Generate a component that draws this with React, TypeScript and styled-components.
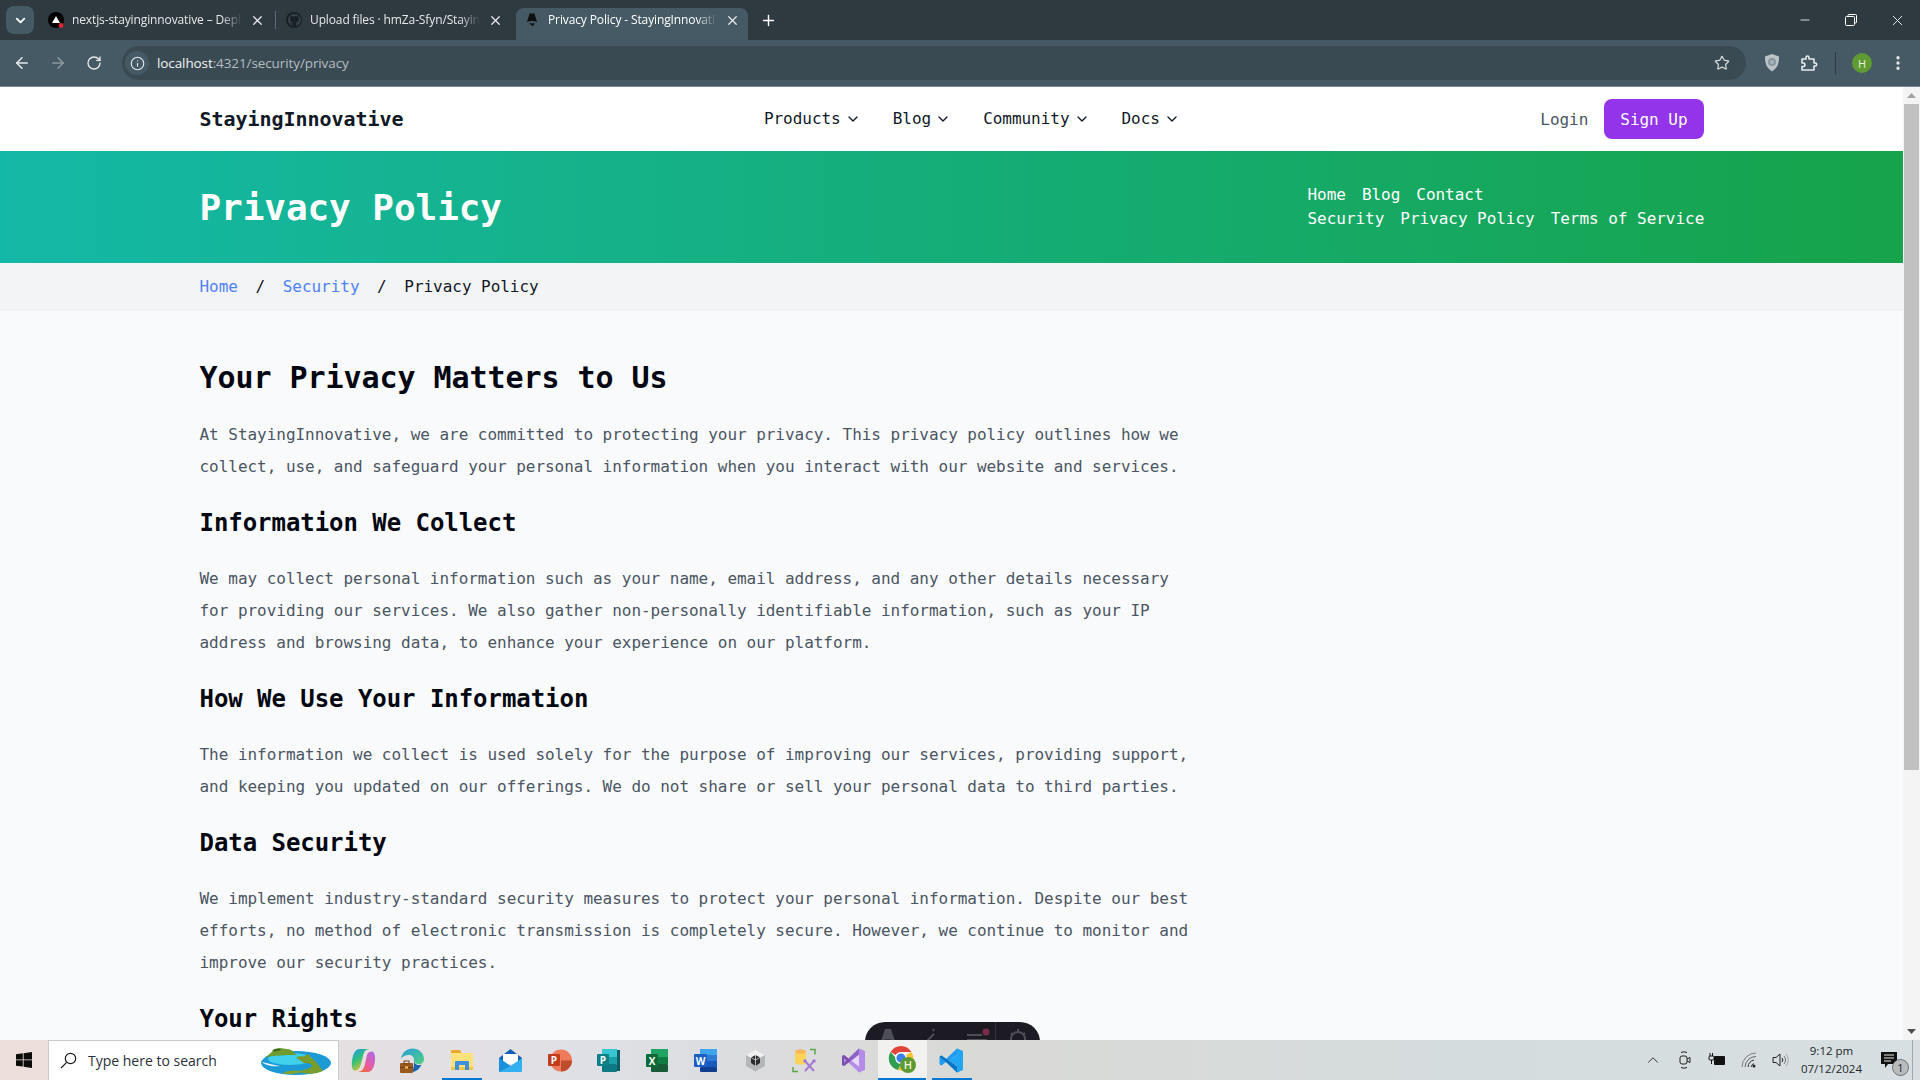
import React from "react";
import styled, { createGlobalStyle } from "styled-components";
import { ArrowLeft, ArrowRight, ChevronDown, ChevronUp, EllipsisVertical, Info, Minus, Plus, RotateCw, Star, X } from "lucide-react";

const Global = createGlobalStyle`
  html, body { margin: 0; padding: 0; height: 100%; overflow: hidden; background: #f9fafb; }
  * { box-sizing: border-box; }
  p, h1, h2, h3 { margin: 0; }
`;

const mono = `"DejaVu Sans Mono", "Liberation Mono", monospace`;
const ui = `"Open Sans", "Noto Sans", "Liberation Sans", sans-serif`;

const Screen = styled.div`
  width: 1920px; height: 1080px; display: flex; flex-direction: column; overflow: hidden;
`;

/* ---------- browser chrome ---------- */
const TabStrip = styled.div`
  height: 40px; background: #2f3a40; display: flex; align-items: flex-end; flex: none;
  padding-left: 6px; font-family: ${ui}; color: #e8eaed;
`;
const TabCaret = styled.div`
  width: 28px; height: 28px; margin: 0 6px 6px 0; border-radius: 8px; background: #455a64;
  display: flex; align-items: center; justify-content: center; color: #fff;
`;
const Tab = styled.div<{ $active?: boolean; $width: number; $gap: number }>`
  width: ${(p) => p.$width}px; height: 32px; margin-right: ${(p) => p.$gap}px; padding: 0 8px 8px;
  display: flex; align-items: center; gap: 8px; position: relative; flex: none;
  background: ${(p) => (p.$active ? "#455a64" : "transparent")};
  border-radius: 8px 8px 0 0;
`;
const TabTitle = styled.span<{ $active?: boolean }>`
  flex: 1; min-width: 0; white-space: nowrap; font-size: 12px; line-height: 16px; letter-spacing: -0.12px;
  overflow: hidden;
  color: ${(p) => (p.$active ? "#fff" : "#e6e8ea")};
  -webkit-mask-image: linear-gradient(to right, #000 88%, transparent 100%);
  mask-image: linear-gradient(to right, #000 88%, transparent 100%);
`;
const TabDivider = styled.div`
  position: absolute; right: -3px; top: 3px; width: 1px; height: 18px; background: #5f6b72;
`;
const NewTab = styled.div`
  margin: 0 0 6px 10px; width: 20px; height: 28px; display: flex; align-items: center; justify-content: center; color: #fff;
`;
const WindowControls = styled.div`
  margin-left: auto; align-self: flex-start; display: flex; color: #fff;
`;
const WindowButton = styled.div`
  width: 46px; height: 40px; display: flex; align-items: center; justify-content: center;
`;
const Toolbar = styled.div`
  height: 47px; flex: none; background: #455a64; display: flex; align-items: flex-start; padding: 6px 4px 0;
  border-bottom: 1px solid #78878f; font-family: ${ui};
`;
const ToolCell = styled.div<{ $dim?: boolean; $shift?: number }>`
  width: 36px; height: 34px; flex: none; display: flex; align-items: center; justify-content: center;
  margin-left: ${(p) => p.$shift ?? 0}px;
  color: ${(p) => (p.$dim ? "#8d9aa1" : "#e8eaed")};
`;
const Omnibox = styled.div`
  flex: 1; height: 34px; margin: 0 8px 0 10px; border-radius: 17px; background: #3a4a53;
  display: flex; align-items: center; padding: 0 16px 0 3px;
`;
const InfoChip = styled.div`
  width: 24px; height: 24px; margin: 0 8px 0 0; border-radius: 50%; background: #455a64;
  display: flex; align-items: center; justify-content: center; color: #e8eaed;
`;
const Url = styled.div`
  flex: 1; font-size: 13.5px; color: #b4bdc2; letter-spacing: -0.1px;
  b { font-weight: 400; color: #f1f3f4; }
`;
const ToolSep = styled.div`
  width: 1px; height: 22px; margin: 6px 8px 0; background: #2c383e; flex: none;
`;
const Avatar = styled.div`
  width: 20px; height: 20px; border-radius: 50%; background: #5f9a32; color: #e8f2de;
  font-size: 11px; display: flex; align-items: center; justify-content: center;
`;

/* ---------- page ---------- */
const Viewport = styled.div`
  flex: 1; min-height: 0; display: flex; position: relative; overflow: hidden; background: #f9fafb;
`;
const Page = styled.div`
  flex: 1; min-width: 0; font-family: ${mono}; letter-spacing: -0.035px;
`;
const Container = styled.div`
  width: 1504px; margin: 0 auto;
`;
const NavBar = styled.header`
  height: 64px; background: #fff;
`;
const NavRow = styled(Container)`
  height: 100%; display: flex; align-items: center; justify-content: space-between;
`;
const Logo = styled.div`
  font-size: 20px; font-weight: 600; color: #111827; letter-spacing: -0.04px;
`;
const NavLinks = styled.nav`
  display: flex; gap: 32px;
`;
const NavLink = styled.div`
  display: flex; align-items: center; gap: 4px; font-size: 16px; line-height: 24px; color: #111827;
`;
const Actions = styled.div`
  display: flex; align-items: center; gap: 16px;
`;
const Login = styled.div`
  font-size: 16px; color: #4b5563;
`;
const SignUp = styled.div`
  height: 40px; padding: 0 16px; border-radius: 8px; background: #9333ea; color: #fff;
  font-size: 16px; display: flex; align-items: center;
`;
const Hero = styled.section`
  height: 112px; background: linear-gradient(to right, #14b8a6, #16a34a); color: #fff;
`;
const HeroRow = styled(Container)`
  height: 100%; display: flex; align-items: center; justify-content: space-between;
`;
const HeroTitle = styled.h1`
  font-size: 36px; line-height: 40px; font-weight: 600; letter-spacing: -0.07px; padding-top: 2px;
`;
const HeroLinks = styled.div`
  width: 396px; display: flex; flex-direction: column; font-size: 16px; line-height: 24px;
`;
const HeroLinkRow = styled.div`
  display: flex; gap: 16px; white-space: nowrap;
`;
const Crumbs = styled.div`
  height: 48px; background: #f3f4f6;
`;
const CrumbRow = styled(Container)`
  height: 100%; display: flex; align-items: center; font-size: 16px; color: #111827; padding-bottom: 1px;
`;
const CrumbLink = styled.span`
  color: #4f82f6;
`;
const CrumbSlash = styled.span`
  margin: 0 17.6px;
`;
const Article = styled(Container)`
  padding-top: 48px;
`;
const Prose = styled.div`
  width: 1003px; display: flex; flex-direction: column; gap: 24px;
`;
const Title = styled.h2`
  font-size: 30px; line-height: 36px; font-weight: 600; color: #030712; letter-spacing: -0.06px;
  padding-top: 1px; margin-bottom: -1px;
`;
const Subtitle = styled.h3`
  font-size: 24px; line-height: 32px; font-weight: 600; color: #030712; letter-spacing: -0.05px;
`;
const Para = styled.p`
  font-size: 16px; line-height: 32px; color: #4b5563;
`;
const Scrollbar = styled.div`
  width: 17px; flex: none; background: #f4f4f4; display: flex; flex-direction: column; align-items: center;
`;
const ScrollCap = styled.div`
  height: 17px; flex: none; display: flex; align-items: center; justify-content: center;
`;
const ScrollThumb = styled.div`
  width: 15px; height: 666px; background: #c1c1c1;
`;
const ScrollGap = styled.div`
  flex: 1;
`;
const DevToolbar = styled.div`
  position: absolute; left: 865px; top: 935px; width: 175px; height: 40px; border-radius: 20px;
  background: #1c1b23; display: flex; align-items: flex-start; padding: 6px 0 0 13px; color: #4e4e57;
`;
const DevCell = styled.div<{ $w: number; $inset?: number }>`
  width: ${(p) => p.$w}px; height: 20px; flex: none; padding-left: ${(p) => p.$inset ?? 0}px;
`;
const DevDivider = styled.div`
  width: 1px; height: 34px; margin-top: -6px; background: #34333c; flex: none;
`;

/* ---------- taskbar ---------- */
const Taskbar = styled.footer`
  height: 40px; flex: none; display: flex; align-items: stretch; font-family: ${ui};
  background: linear-gradient(to right, #eddfdb 0%, #e6dfe0 15%, #dfe0e6 30%, #d9d9d6 50%, #d5dcdd 75%, #d7dfe2 100%);
`;
const StartCell = styled.div`
  width: 48px; flex: none; display: flex; align-items: center; justify-content: center;
`;
const SearchBox = styled.div`
  width: 291px; flex: none; background: #fff; border: 1px solid #c9cbcd; border-bottom: 0;
  display: flex; align-items: center; padding: 0 6px 0 11px; gap: 11px; color: #2a3138; font-size: 14px;
`;
const SearchText = styled.span`
  flex: 1; white-space: nowrap;
`;
const AppCell = styled.div<{ $on?: boolean; $bar?: boolean }>`
  width: 49px; flex: none; position: relative; display: flex; align-items: center; justify-content: center;
  background: ${(p) => (p.$on ? "#f1f1ef" : "transparent")};
  &::after {
    content: ""; position: absolute; bottom: 0; height: 2px; background: #0078d4;
    left: ${(p) => (p.$on ? 0 : 5)}px; right: ${(p) => (p.$on ? 1 : 4)}px;
    display: ${(p) => (p.$bar ? "block" : "none")};
  }
`;
const Tray = styled.div`
  margin-left: auto; display: flex; align-items: stretch; color: #1e2225;
`;
const TrayCell = styled.div`
  width: 32px; display: flex; align-items: center; justify-content: center;
`;
const Clock = styled.div`
  width: 69px; display: flex; flex-direction: column; align-items: center; justify-content: center;
  font-size: 11.5px; line-height: 18px; color: #22272b;
`;
const NotifyCell = styled.div`
  width: 46px; position: relative; display: flex; align-items: center; justify-content: center;
`;
const NotifyBadge = styled.div`
  position: absolute; left: 26px; top: 19px; width: 17px; height: 17px; border-radius: 50%;
  background: #b9bcbd; border: 1px solid #6e7275; font-size: 11px; line-height: 15px; text-align: center; color: #222;
`;
const ShowDesktop = styled.div`
  width: 8px; border-left: 1px solid #9fa5a8;
`;

/* ---------- drawings ---------- */
const VercelFav = () => (
  <svg width="16" height="16" viewBox="0 0 16 16"><circle cx="8" cy="8" r="8" fill="#000" /><path d="M8 4l4 7H4z" fill="#fff" /><circle cx="13" cy="13.5" r="2.4" fill="#e5213a" /></svg>
);
const GithubFav = () => (
  <svg width="16" height="16" viewBox="0 0 16 16"><circle cx="8" cy="8" r="8" fill="#1a2126" /><path fill="#39444a" d="M8 2.2C4.700 2.2 2.100 4.800 2.100 8c0 2.600 1.700 4.800 4 5.600.3 0 .4-.1.4-.3v-1c-1.600.3-2-.4-2.100-.8-.1-.2-.4-.8-.7-.9-.2-.1-.5-.4 0-.4.5 0 .8.4.9.6.6 1 1.500.7 1.900.5 0-.4.2-.7.4-.9-1.400-.2-2.900-.7-2.900-3.200 0-.7.3-1.300.7-1.700-.1-.2-.3-.8.1-1.700 0 0 .6-.2 1.900.7.6-.2 1.200-.2 1.800-.2s1.200.1 1.800.2c1.300-.9 1.900-.7 1.900-.7.4.9.1 1.500.1 1.700.4.4.7 1 .7 1.700 0 2.500-1.600 3-3 3.200.2.2.4.6.4 1.200v1.800c0 .2.1.3.4.3 2.300-.8 4-3 4-5.600 0-3.200-2.700-5.800-5.900-5.800z" /></svg>
);
const AstroFav = () => (
  <svg width="16" height="16" viewBox="0 0 16 16"><path d="M5.600 1.500h4.800L13 10c-1.500-.8-3-1.100-5-1.100S4.500 9.200 3 10z" fill="#0d0f11" /><path d="M5.500 11c1 .6 4 .6 5 0 0 1.500-1.200 2-1.700 3.500-.5-1-1.600-1-1.800-1.900-.8-.2-1.500-.7-1.500-1.600z" fill="#0d0f11" /></svg>
);
const Restore = () => (
  <svg width="12" height="12" viewBox="0 0 12 12" fill="none" stroke="#fff"><rect x=".5" y="2.5" width="9" height="9" rx="1" /><path d="M3 2.500V1.500a1 1 0 0 1 1-1h6.500a1 1 0 0 1 1 1V8a1 1 0 0 1-1 1H9.500" /></svg>
);
const Shield = () => (
  <svg width="18" height="20" viewBox="0 0 18 20"><path d="M9 1l7 2.500c.2 6.500-1.500 11.500-7 15-5.500-3.500-7.200-8.500-7-15z" fill="#b9c3c8" /><circle cx="9" cy="9" r="4" fill="#8896a0" /><circle cx="9" cy="9" r="2" fill="#aab4ba" /></svg>
);
const Puzzle = () => (
  <svg width="20" height="20" viewBox="0 0 20 20" fill="none" stroke="#e8eaed" strokeWidth="1.6" strokeLinejoin="round"><path d="M3 6h4V4.500a1.500 1.500 0 0 1 3 0V6h5v4h1.200a1.500 1.500 0 0 1 0 3H15v4H3v-3.500h1.200a1.700 1.700 0 0 0 0-3.500H3z" /></svg>
);
const WinLogo = () => (
  <svg width="16" height="16" viewBox="0 0 16 16" fill="#0b0b0b"><path d="M0 2.300l6.800-1v6.200H0zM7.600 1.200L16 0v7.500H7.600zM0 8.300h6.800v6.300L0 13.700zM7.600 8.300H16V16l-8.400-1.200z" /></svg>
);
const SearchGlass = () => (
  <svg width="17" height="17" viewBox="0 0 17 17" fill="none" stroke="#1b1b1b" strokeWidth="1.2"><circle cx="10.500" cy="6.500" r="5.200" /><path d="M6.700 10.300L1 16" /></svg>
);
const Island = () => (
  <svg width="72" height="32" viewBox="0 0 72 32">
    <ellipse cx="36" cy="18" rx="35" ry="12" fill="#1b9ad6" />
    <ellipse cx="30" cy="14" rx="22" ry="6" fill="#3fd0ec" />
    <path d="M3 13c5-1 8-7 14-9 3-2 6 0 10 0 5 0 7 4 10 6-10 0-24 0-34 3z" fill="#6f9a2e" />
    <path d="M12 6c3-3 7-3 9-1-3 1-6 2-9 1z" fill="#3c6a1e" />
    <path d="M36 13c3-3 6-1 9-2 3-3 5-1 6 2 5 2 8 8 12 13-10 4-18 3-24 1 4-3 12-3 13-6 0-3-5-3-8-3-3-2-5-4-8-5z" fill="#7a9c2c" />
    <path d="M22 28c6-3 14-3 22-2-6 3-16 4-22 2z" fill="#83a22f" />
    <path d="M2 17c6 1 10 3 18 4-8 1-15-1-18-4z" fill="#e8f6fb" />
  </svg>
);
const Copilot = () => (
  <svg width="25" height="25" viewBox="0 0 25 25">
    <defs>
      <linearGradient id="cpA" x1="0" y1="0" x2="0.6" y2="1"><stop offset="0" stopColor="#1d9bf0" /><stop offset=".5" stopColor="#35c07a" /><stop offset="1" stopColor="#f7c325" /></linearGradient>
      <linearGradient id="cpB" x1="1" y1="0" x2="0.2" y2="1"><stop offset="0" stopColor="#a86bf2" /><stop offset=".6" stopColor="#e85b9c" /><stop offset="1" stopColor="#f0682d" /></linearGradient>
    </defs>
    <path d="M8 1h11c-3.500 0-5.500 1.500-6.500 5L10 16c-1 4-3 7-6.500 6.500C1 22 .5 18 1 13.500 1.500 7 4 1.500 8 1z" fill="url(#cpA)" />
    <path d="M6 24h11c4 0 6.500-5.500 7-11.500.4-4.500-.5-8.500-3-9-3-.5-5 2-5.500 5.500l-2 9C12.500 21 10.500 24 6 24z" fill="url(#cpB)" />
  </svg>
);
const Edge = () => (
  <svg width="25" height="25" viewBox="0 0 25 25">
    <defs><linearGradient id="edA" x1="0" y1="0" x2="1" y2="1"><stop offset="0" stopColor="#2a9ede" /><stop offset="1" stopColor="#4ed17f" /></linearGradient></defs>
    <path d="M1 11C2 4 7 .5 12.500.5 19 .5 24 5.500 24 11c0 4-3 5.500-6 5-3-.5-4-2-4-4 0-3-2-5-5-5-4 0-7 2-8 4z" fill="url(#edA)" />
    <path d="M14 12c0 3 2 5 5 5 1 0 1.800-.2 2.500-.6C19.500 21.500 15 24 11 24c-2 0-3-.3-3-.3h3c2 0 3-4 3-11.700z" fill="#1b64b0" />
    <rect x="0" y="15" width="13" height="10" rx="1" fill="#9a5a1f" />
    <rect x="4" y="13" width="5" height="3" fill="none" stroke="#7a4516" />
    <rect x="0" y="19" width="13" height="1" fill="#6d3c11" /><rect x="5" y="18.5" width="3" height="2" fill="#f5c24d" />
  </svg>
);
const Explorer = () => (
  <svg width="24" height="24" viewBox="0 0 24 24">
    <path d="M1 3a1 1 0 0 1 1-1h8l1.500 3H1z" fill="#e8a82c" />
    <rect x="1" y="5" width="22" height="16" rx="1" fill="#fde27c" />
    <path d="M1 19h22v2a1 1 0 0 1-1 1H2a1 1 0 0 1-1-1z" fill="#f4c542" />
    <path d="M5 22v-8a1 1 0 0 1 1-1h12a1 1 0 0 1 1 1v8h-4v-5H9v5z" fill="#3d8fe0" />
  </svg>
);
const Mail = () => (
  <svg width="25" height="25" viewBox="0 0 25 25">
    <path d="M12.500 1L24 10v3H1v-3z" fill="#0f5fb4" />
    <path d="M5 6h15v10H5z" fill="#fff" />
    <path d="M1 10l11.500 8L24 10v13a1 1 0 0 1-1 1H2a1 1 0 0 1-1-1z" fill="#33b0ee" />
    <path d="M1 10l11.500 8-11.500 6z" fill="#1b90dd" />
  </svg>
);
const Ppt = () => (
  <svg width="25" height="25" viewBox="0 0 25 25">
    <circle cx="14" cy="12.5" r="11" fill="#ee7a5b" />
    <path d="M14 12.500h11a11 11 0 0 1-11 11z" fill="#bf4d2c" />
    <rect x="1" y="6" width="12" height="12" rx="1" fill="#c23c1c" />
    <text x="7" y="16" fontFamily="Open Sans, sans-serif" fontSize="10" fontWeight="700" fill="#fff" textAnchor="middle">P</text>
  </svg>
);
const Pub = () => (
  <svg width="25" height="25" viewBox="0 0 25 25">
    <rect x="6" y="1" width="15" height="8" fill="#37c6d0" />
    <rect x="6" y="9" width="15" height="7" fill="#1ba0a8" />
    <rect x="6" y="16" width="15" height="8" rx="1" fill="#0c7a80" />
    <rect x="21" y="2" width="3" height="21" fill="#0c5f66" />
    <rect x="1" y="6" width="12" height="12" rx="1" fill="#0b7f86" />
    <text x="7" y="16" fontFamily="Open Sans, sans-serif" fontSize="10" fontWeight="700" fill="#fff" textAnchor="middle">P</text>
  </svg>
);
const Excel = () => (
  <svg width="25" height="25" viewBox="0 0 25 25">
    <rect x="6" y="1" width="17" height="8" fill="#21a366" />
    <rect x="6" y="9" width="17" height="7" fill="#107c41" />
    <rect x="6" y="16" width="17" height="8" rx="1" fill="#185c37" />
    <rect x="1" y="6" width="12" height="13" rx="1" fill="#0e6b38" />
    <text x="7" y="16.5" fontFamily="Open Sans, sans-serif" fontSize="10" fontWeight="700" fill="#fff" textAnchor="middle">X</text>
  </svg>
);
const Word = () => (
  <svg width="25" height="25" viewBox="0 0 25 25">
    <rect x="6" y="1" width="17" height="6" fill="#41a5ee" />
    <rect x="6" y="7" width="17" height="6" fill="#2b7cd3" />
    <rect x="6" y="13" width="17" height="6" fill="#185abd" />
    <rect x="6" y="19" width="17" height="5" rx="1" fill="#103f91" />
    <rect x="0" y="6" width="13" height="13" rx="1" fill="#1a5fc4" />
    <text x="6.5" y="16.5" fontFamily="Open Sans, sans-serif" fontSize="10" fontWeight="700" fill="#fff" textAnchor="middle">W</text>
  </svg>
);
const Unity = () => (
  <svg width="25" height="25" viewBox="0 0 25 25">
    <path d="M12.500 1.500L22 7v11l-9.500 5.500L3 18V7z" fill="#b4b6b8" />
    <path d="M12.500 1.500L22 7l-9.500 5.500L3 7z" fill="#f0f0f0" />
    <path d="M12.500 7l4.500 2.500v5.500L12.500 18 8 15V9.500z" fill="#2c2c2e" />
    <path d="M12.500 7v11M8 9.500l4.500 2.500 4.500-2.500" stroke="#d8d8d8" strokeWidth=".8" fill="none" />
  </svg>
);
const ToolIcon = () => (
  <svg width="25" height="25" viewBox="0 0 25 25" fill="none">
    <path d="M3 3h11v12c-2 2-9 2-11 0z" fill="#fcd558" />
    <ellipse cx="8.5" cy="3.5" rx="5.5" ry="2.2" fill="#f6b65c" />
    <path d="M18 1.500h5v5M1 19v4.500h5" stroke="#58a645" strokeWidth="1.5" />
    <path d="M13 13l9 10M22 13l-9 10" stroke="#a77ad0" strokeWidth="2" />
    <circle cx="13" cy="13" r="1.8" fill="#a77ad0" /><circle cx="22" cy="13" r="1.8" fill="#a77ad0" />
  </svg>
);
const VStudio = () => (
  <svg width="25" height="25" viewBox="0 0 25 25">
    <path d="M18 .500L24 3v19l-6 2.500L7.500 14.500 3 18l-2-1V8l2-1 4.500 3.500z" fill="#b58ce8" />
    <path d="M18 6.500v12L10 12.500z" fill="#e7d9fa" />
    <path d="M1 8l2-1 4.500 3.500 3 2-3 2L3 18l-2-1zM3 10v5l2.500-2.500z" fill="#7b51ad" fillRule="evenodd" />
    <path d="M18 .500L7.500 10.500l3 2L18 6.500z" fill="#8e62c4" />
  </svg>
);
const Chrome = () => (
  <svg width="30" height="30" viewBox="0 0 30 30">
    <path d="M13 1a12 12 0 0 1 10.400 6H13a6 6 0 0 0-5.200 3L2.600 7A12 12 0 0 1 13 1z" fill="#e2443a" />
    <path d="M2.600 7l5.200 6a6 6 0 0 0 5.200 6l-3 6A12 12 0 0 1 2.600 7z" fill="#2f9e4f" />
    <path d="M23.400 7A12 12 0 0 1 10 25l3-6a6 6 0 0 0 5.200-9z" fill="#f8c22d" />
    <circle cx="13" cy="13" r="5.2" fill="#3c80f0" stroke="#fff" strokeWidth="1.3" />
    <circle cx="20" cy="20" r="8" fill="#5e9a33" />
    <text x="20" y="24" fontFamily="Open Sans, sans-serif" fontSize="11" fontWeight="600" fill="#eaf4dd" textAnchor="middle">H</text>
  </svg>
);
const VSCode = () => (
  <svg width="25" height="25" viewBox="0 0 25 25">
    <path d="M18 .500L7 11 2.500 7.500.5 8.800v7.400L2.500 17.500 7 14l11 10.500 6-2.700V3.200zM18 7v11l-7.500-5.500z" fill="#1f9cf0" fillRule="evenodd" />
    <path d="M.5 8.800L2.500 7.500 18 18.500v6L7 14z" fill="#0a76c4" />
    <path d="M18 .500l6 2.700v18.600l-6 2.700V18l-7.500-5.500L18 7z" fill="#22a6f2" fillRule="evenodd" />
  </svg>
);
const MeetNow = () => (
  <svg width="16" height="22" viewBox="0 0 16 22" fill="none" stroke="#222" strokeWidth="1"><rect x="3" y="7" width="7" height="8" rx="2" /><path d="M10 10l3-1.500v5L10 12" /><path d="M4 3.500a7 7 0 0 1 6 0M4 18.500a7 7 0 0 0 6 0" /></svg>
);
const Battery = () => (
  <svg width="18" height="14" viewBox="0 0 18 14" fill="#111"><rect x="6" y="3" width="11" height="9" rx="1" /><rect x="1" y="3" width="5" height="4" rx="1" fill="none" stroke="#111" /><path d="M2 0v3M4.500 0v3M3.500 7v4" stroke="#111" fill="none" /></svg>
);
const Wifi = () => (
  <svg width="16" height="16" viewBox="0 0 16 16" fill="none" stroke="#333" strokeWidth="1"><path d="M1 15A14 14 0 0 1 15 1" opacity=".55" /><path d="M4 15A11 11 0 0 1 15 4.500" opacity=".7" /><path d="M7 15a8 8 0 0 1 6-7" /><path d="M10 15a5 5 0 0 1 3-3.500" /><circle cx="13" cy="14" r="1.5" fill="#222" stroke="none" /></svg>
);
const Volume = () => (
  <svg width="18" height="16" viewBox="0 0 18 16" fill="none" stroke="#222" strokeWidth="1"><path d="M1 5.500h3L8 2v12L4 10.500H1z" /><path d="M10 6a3 3 0 0 1 0 4" /><path d="M12 4a6 6 0 0 1 0 8" stroke="#777" /><path d="M14 2a9 9 0 0 1 0 12" stroke="#aaa" /></svg>
);
const Bubble = () => (
  <svg width="17" height="17" viewBox="0 0 17 17"><path d="M0 0h16v12H7l-3 4v-4H0z" fill="#111" /><path d="M3 3h10M3 6h10M3 9h7" stroke="#e8eaea" strokeWidth="1" /></svg>
);

const apps = [
  { id: "copilot", Icon: Copilot },
  { id: "edge", Icon: Edge },
  { id: "explorer", Icon: Explorer, bar: true },
  { id: "mail", Icon: Mail },
  { id: "ppt", Icon: Ppt },
  { id: "pub", Icon: Pub },
  { id: "excel", Icon: Excel },
  { id: "word", Icon: Word },
  { id: "unity", Icon: Unity },
  { id: "tool", Icon: ToolIcon },
  { id: "vs", Icon: VStudio },
  { id: "chrome", Icon: Chrome, bar: true, on: true },
  { id: "vscode", Icon: VSCode, bar: true },
];

const navItems = ["Products", "Blog", "Community", "Docs"];

export default function App() {
  return (
    <Screen>
      <Global />
      <TabStrip>
        <TabCaret><ChevronDown size={15} strokeWidth={3} /></TabCaret>
        <Tab $width={233} $gap={5}>
          <VercelFav />
          <TabTitle>nextjs-stayinginnovative – Depl</TabTitle>
          <X size={15} strokeWidth={2} />
          <TabDivider />
        </Tab>
        <Tab $width={233} $gap={5}>
          <GithubFav />
          <TabTitle>Upload files · hmZa-Sfyn/Stayin</TabTitle>
          <X size={15} strokeWidth={2} />
        </Tab>
        <Tab $width={232} $gap={0} $active>
          <AstroFav />
          <TabTitle $active>Privacy Policy - StayingInnovati</TabTitle>
          <X size={15} strokeWidth={2} />
        </Tab>
        <NewTab><Plus size={17} strokeWidth={2} /></NewTab>
        <WindowControls>
          <WindowButton><Minus size={14} strokeWidth={1.4} /></WindowButton>
          <WindowButton><Restore /></WindowButton>
          <WindowButton><X size={17} strokeWidth={1.2} /></WindowButton>
        </WindowControls>
      </TabStrip>
      <Toolbar>
        <ToolCell><ArrowLeft size={18} strokeWidth={2} /></ToolCell>
        <ToolCell $dim><ArrowRight size={18} strokeWidth={2} /></ToolCell>
        <ToolCell><RotateCw size={16} strokeWidth={2} /></ToolCell>
        <Omnibox>
          <InfoChip><Info size={15} strokeWidth={1.8} /></InfoChip>
          <Url><b>localhost</b>:4321/security/privacy</Url>
          <Star size={16} strokeWidth={1.8} color="#d5dadd" />
        </Omnibox>
        <ToolCell><Shield /></ToolCell>
        <ToolCell $shift={1}><Puzzle /></ToolCell>
        <ToolSep />
        <ToolCell><Avatar>H</Avatar></ToolCell>
        <ToolCell><EllipsisVertical size={18} strokeWidth={2.4} /></ToolCell>
      </Toolbar>
      <Viewport>
        <Page>
          <NavBar>
            <NavRow>
              <Logo>StayingInnovative</Logo>
              <NavLinks>
                {navItems.map((n) => (
                  <NavLink key={n}>{n}<ChevronDown size={16} strokeWidth={2} /></NavLink>
                ))}
              </NavLinks>
              <Actions>
                <Login>Login</Login>
                <SignUp>Sign Up</SignUp>
              </Actions>
            </NavRow>
          </NavBar>
          <Hero>
            <HeroRow>
              <HeroTitle>Privacy Policy</HeroTitle>
              <HeroLinks>
                <HeroLinkRow><span>Home</span><span>Blog</span><span>Contact</span></HeroLinkRow>
                <HeroLinkRow><span>Security</span><span>Privacy Policy</span><span>Terms of Service</span></HeroLinkRow>
              </HeroLinks>
            </HeroRow>
          </Hero>
          <Crumbs>
            <CrumbRow>
              <CrumbLink>Home</CrumbLink><CrumbSlash>/</CrumbSlash>
              <CrumbLink>Security</CrumbLink><CrumbSlash>/</CrumbSlash>
              <span>Privacy Policy</span>
            </CrumbRow>
          </Crumbs>
          <Article>
            <Prose>
              <Title>Your Privacy Matters to Us</Title>
              <Para>At StayingInnovative, we are committed to protecting your privacy. This privacy policy outlines how we collect, use, and safeguard your personal information when you interact with our website and services.</Para>
              <Subtitle>Information We Collect</Subtitle>
              <Para>We may collect personal information such as your name, email address, and any other details necessary for providing our services. We also gather non-personally identifiable information, such as your IP address and browsing data, to enhance your experience on our platform.</Para>
              <Subtitle>How We Use Your Information</Subtitle>
              <Para>The information we collect is used solely for the purpose of improving our services, providing support, and keeping you updated on our offerings. We do not share or sell your personal data to third parties.</Para>
              <Subtitle>Data Security</Subtitle>
              <Para>We implement industry-standard security measures to protect your personal information. Despite our best efforts, no method of electronic transmission is completely secure. However, we continue to monitor and improve our security practices.</Para>
              <Subtitle>Your Rights</Subtitle>
            </Prose>
          </Article>
        </Page>
        <Scrollbar>
          <ScrollCap><svg width="9" height="5" viewBox="0 0 9 5"><path d="M4.500 0L9 5H0z" fill="#a3a3a3" /></svg></ScrollCap>
          <ScrollThumb />
          <ScrollGap />
          <ScrollCap><svg width="9" height="5" viewBox="0 0 9 5"><path d="M0 0h9L4.500 5z" fill="#505050" /></svg></ScrollCap>
        </Scrollbar>
        <DevToolbar>
          <DevCell $w={44}><svg width="20" height="20" viewBox="0 0 20 20" fill="currentColor"><path d="M7 1h6l4 12c-2-1-4-1.500-7-1.500S5 12 3 13z" /></svg></DevCell>
          <DevCell $w={43}><svg width="20" height="20" viewBox="0 0 20 20" fill="none" stroke="currentColor" strokeWidth="2"><path d="M4 14L12 6M11 1l1 2" /></svg></DevCell>
          <DevCell $w={30}><svg width="28" height="20" viewBox="0 0 28 20" fill="none" stroke="currentColor" strokeWidth="2"><path d="M2 7h15M2 12h20" /><circle cx="21" cy="4" r="3.5" fill="#7a2d4a" stroke="none" /></svg></DevCell>
          <DevDivider />
          <DevCell $w={44} $inset={12}><svg width="20" height="20" viewBox="0 0 20 20" fill="none" stroke="currentColor" strokeWidth="2"><circle cx="10" cy="11" r="7" /><path d="M10 1v3M3 5l2 2M17 5l-2 2" /></svg></DevCell>
        </DevToolbar>
      </Viewport>
      <Taskbar>
        <StartCell><WinLogo /></StartCell>
        <SearchBox>
          <SearchGlass />
          <SearchText>Type here to search</SearchText>
          <Island />
        </SearchBox>
        {apps.map(({ id, Icon, bar, on }) => (
          <AppCell key={id} $bar={bar} $on={on}><Icon /></AppCell>
        ))}
        <Tray>
          <TrayCell><ChevronUp size={18} strokeWidth={1.2} /></TrayCell>
          <TrayCell><MeetNow /></TrayCell>
          <TrayCell><Battery /></TrayCell>
          <TrayCell><Wifi /></TrayCell>
          <TrayCell><Volume /></TrayCell>
          <Clock><span>9:12 pm</span><span>07/12/2024</span></Clock>
          <NotifyCell><Bubble /><NotifyBadge>1</NotifyBadge></NotifyCell>
          <ShowDesktop />
        </Tray>
      </Taskbar>
    </Screen>
  );
}
